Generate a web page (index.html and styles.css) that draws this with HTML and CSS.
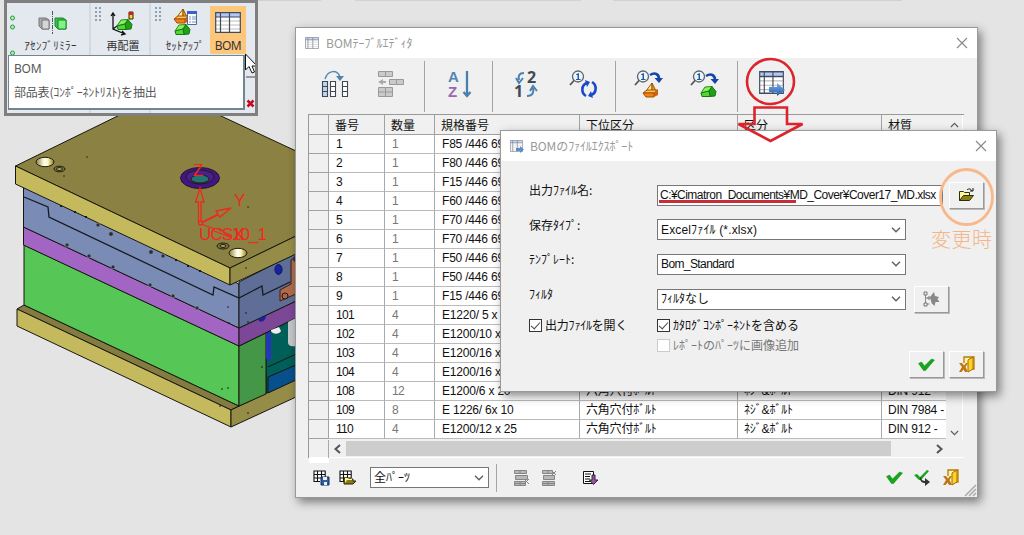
FILE: index.html
```html
<!DOCTYPE html>
<html lang="ja">
<head>
<meta charset="utf-8">
<title>BOM</title>
<link rel="stylesheet" href="styles.css">
</head>
<body>
<svg width="0" height="0" class="defs">
  <defs>
    <linearGradient id="hole"><stop offset="0" stop-color="#8b8030"/><stop offset=".45" stop-color="#fffef0"/><stop offset=".65" stop-color="#fff8c0"/><stop offset="1" stop-color="#857827"/></linearGradient>
    <linearGradient id="arrowBlue" x2="0" y2="1"><stop offset="0" stop-color="#7fb0e8"/><stop offset="1" stop-color="#2459a8"/></linearGradient>
    <symbol id="table" viewBox="0 0 26 21" preserveAspectRatio="none"><path d="M1 1h24v19H1z" fill="#fff"/><path d="M1 1h24v4H1z" fill="#b5c8f2"/><path d="M1 9h24M1 13h24M1 17h24" stroke="#bbb"/><path d="M.7.7h24.6v19.6H.7zM1 5h24M5.500 1v19M14.500 1v19" fill="none" stroke="#414b5e" stroke-width="1.200"/></symbol>
    <symbol id="check" viewBox="0 0 16 13"><path d="M0 5.500l3-1.500 3 4 7-7 3 1-9 10.500H5z" fill="#16a51b" stroke="#0d8b12" stroke-width=".5"/></symbol>
    <symbol id="exit" viewBox="0 0 17 17"><path d="M6 7V1h10v12h-4" fill="#fff3b2" stroke="#b67b00" stroke-width="1.300"/><path d="M10 4l5-3v12l-5 3z" fill="#ffd12b" stroke="#a86a00"/><path d="M1 7h3l2 2.500 2-2.500h2l-2.500 4L10 16H7l-1.500-2.500L3.500 16H1l3-5z" fill="#c07513"/></symbol>
    <symbol id="lens" viewBox="0 0 16 16"><path d="M5.500 10L1 15" stroke="#555" stroke-width="1.800"/><circle cx="9" cy="6.500" r="5.500" fill="#eef5fb" stroke="#5b6670" stroke-width="1.300"/><path d="M7 4.500l2-1.200h1V9h1.500v1H7V9h1.500V5H7z" fill="#2457a8"/></symbol>
    <symbol id="green" viewBox="0 0 17 11"><path d="M5 1l7-.5L9 5 1 7z" fill="#8bf25c" stroke="#258b18"/><path d="M12 .5l4 5-1 4.500-5 .5L9 5z" fill="#1fa018" stroke="#187713"/><path d="M1 7l8-2 1 5.500-8 0z" fill="#51d736" stroke="#187713"/></symbol>
    <symbol id="orange" viewBox="0 0 17 16"><path d="M10 1L4 9l6 1z" fill="#fff2a0" stroke="#975200"/><path d="M10 1l4 8-4 1z" fill="#e5a31c" stroke="#975200"/><path d="M1 11l4-3h11l-4 3z" fill="#ffc163" stroke="#a65000"/><path d="M1 11h11v4H4z" fill="#f28119" stroke="#a65000"/><path d="M12 11l4-3v5l-4 2z" fill="#c86407"/></symbol>
    <symbol id="jump" viewBox="0 0 14 12"><path d="M1 3c5-3 9-1 9 4" fill="none" stroke="#1645a9" stroke-width="2.600"/><path d="M5.500 6h8.500l-4 5z" fill="#1645a9"/></symbol>
    <symbol id="down" viewBox="0 0 10 6"><path d="M1 .8l4 4 4-4" fill="none" stroke="#606060" stroke-width="1.400"/></symbol>
    <symbol id="close" viewBox="0 0 12 12"><path d="M1 1l10 10M11 1L1 11" stroke="#888" stroke-width="1.100"/></symbol>
    <symbol id="minitable" viewBox="0 0 17 15"><path d="M1 1h11v11H1z" fill="#fff"/><path d="M.5 1h12M1 4.500h11M1 8h11M1 11.500h6M1 .5v11.500M4.500 1v11M8.500 1v10M12.200.5V8" stroke="#111" stroke-width="1.100" fill="none"/></symbol>
  </defs>
</svg>

<main class="desktop">
  <svg class="model" viewBox="0 110 296 325" width="296" height="325">
    <g stroke="#17170f" stroke-width="1" stroke-linejoin="round">
      <path d="M17 309l7-4 215 101-8 4z" fill="#847b40"/>
      <path d="M17 309l214 101v17L17 326z" fill="#c5b95e"/>
      <path d="M231 410l65-31v18l-65 30z" fill="#958c47"/>
      <path d="M266 333l30-15v61l-30 14z" fill="#005f58"/>
      <path d="M268 377l28-12v15l-28 13z" fill="#07508c"/>
      <path d="M268 367l28-13" fill="none"/>
      <path d="M24 245l215 101v60L24 305z" fill="#56c757"/>
      <path d="M239 346l27-13v61l-27 12z" fill="#449746"/>
      <path d="M23.500 227L239 328v18L23.500 245z" fill="#a365c4"/>
      <path d="M239 328l57-27v17l-57 28z" fill="#7c4796"/>
      <path d="M23.500 187L239 284v44L23.500 227z" fill="#7a8cb5"/>
      <path d="M239 282l57-29v48l-57 27z" fill="#5f6e96"/>
      <path d="M15.500 166L132 109h74l90 42v85l-66 32z" fill="#8a8142"/>
      <path d="M15.500 166L230 268v17L15.500 184z" fill="#c5b95e"/>
      <path d="M230 268l66-32v18l-66 31z" fill="#958c47"/>
    </g>
    <g fill="none" stroke="#151a20" stroke-width="1.300">
      <path d="M24 197l24 10 1 10 164 78 1-8 25 11 23-12 1 9 27-13"/>
      <path d="M60 206h3m11 6h3m8 5h3m87 43h3m9 6h3m9 5h3" stroke-dasharray="2 1" stroke-width="2"/>
    </g>
    <g fill="#26303d" stroke="#929b9b" stroke-width=".6"><circle cx="98" cy="225" r="2"/><circle cx="111" cy="234" r="2.300"/><circle cx="151" cy="252" r="2.300"/><circle cx="163" cy="256" r="2"/><circle cx="67" cy="245" r="2"/><circle cx="89" cy="256" r="2"/><circle cx="113" cy="267" r="2"/><circle cx="150" cy="285" r="2"/><circle cx="173" cy="296" r="2"/><circle cx="197" cy="308" r="2"/></g>
    <g fill="#111"><circle cx="87" cy="157" r=".7"/><circle cx="64" cy="176" r=".7"/><circle cx="248" cy="207" r=".7"/><circle cx="222" cy="389" r=".8"/><circle cx="228" cy="388" r=".8"/><circle cx="220" cy="406" r=".8"/><circle cx="248" cy="413" r=".8"/><circle cx="262" cy="367" r=".8"/><circle cx="228" cy="307" r=".8"/><circle cx="246" cy="313" r=".8"/><circle cx="229" cy="323" r=".8"/><circle cx="248" cy="322" r=".8"/><circle cx="246" cy="268" r=".7"/></g>
    <g stroke="#201e10"><ellipse cx="45" cy="162" rx="9" ry="4.700" fill="url(#hole)"/><ellipse cx="238" cy="253" rx="9" ry="4.700" fill="url(#hole)"/><ellipse cx="59.500" cy="169" rx="5.500" ry="2.800" fill="#7b7642"/><ellipse cx="59.500" cy="169" rx="3" ry="1.500" fill="#aaa65a"/><ellipse cx="223" cy="246" rx="6" ry="3" fill="#7b7642"/><ellipse cx="223" cy="246" rx="3" ry="1.500" fill="#aaa65a"/>
      <ellipse cx="200" cy="178" rx="19.500" ry="10.500" fill="#45148a"/><ellipse cx="200" cy="177" rx="14" ry="7" fill="#4a208f"/><ellipse cx="200" cy="179" rx="9" ry="4" fill="#247474"/></g>
    <ellipse cx="278.500" cy="269.500" rx="3.600" ry="5" fill="#16249b" stroke="#111a60"/><path d="M258 319c1 4 7 4 8-3z" fill="#19249c"/>
    <path d="M296 257l-5 3v24l-11 6v11l16-7z" fill="#af6b4c" stroke="#372018"/><circle cx="285" cy="296" r="3" fill="#ac6848" stroke="#28150e"/><circle cx="296" cy="259" r="3" fill="#334"/>
    <path d="M266 333h5v27l-3 1-2-3z" fill="#2536b8"/><path d="M271 330l8-3 2 4c-2 4-9 3-10 0z" fill="#eee"/><path d="M288 322l8-4v28c-6 1-8-1-8-4z" fill="#c3c7c7"/>
    <g fill="none" stroke="#ee291e" stroke-width="1.300">
      <path d="M198.500 221v-19h-3l4.500-14 4 14h-3v19M202 222l16-8-2-3 15-3-11 9-2-2-16 8M201 224l14 5m-1 2l16 6-11-9"/>
      <circle cx="200.500" cy="223" r="2"/>
    </g>
    <text class="ucs" x="193" y="176">Z</text><text class="ucs" x="234" y="206">Y</text>
    <text class="ucs" x="199" y="240" textLength="68">UCS10_1</text><text class="ucs" x="233" y="240">X</text>
  </svg>

  <section class="ribbon">
    <div class="group first">
      <svg width="12" height="48"><g fill="#b1efb0" stroke="#239c42"><circle cx="5.500" cy="11" r="2"/><circle cx="5.500" cy="20" r="2"/><circle cx="5.500" cy="46" r="2"/></g></svg>
      <div class="tool"><svg width="30" height="26"><path d="M1 8h7l3 2v9H4l-3-3z" fill="#aaa" stroke="#777"/><path d="M4 10h7v9H4z" fill="#d5d5d5" stroke="#777"/><path d="M14.500 1v23" stroke="#555" stroke-dasharray="4 1 1 1"/><path d="M17 8h8l3 2v9h-8l-3-3z" fill="#3cc04b" stroke="#188b28"/><path d="M20 10h8v9h-8z" fill="#83f184" stroke="#15852c"/></svg><span class="t-mirror">ｱｾﾝﾌﾞﾘﾐﾗｰ</span></div>
    </div>
    <div class="group second"><i class="dots"></i><div class="tool"><svg width="26" height="26"><path d="M3 2v16l12 5M3 18l11-8M1 5l2-3 2 3m7 15l3 3-4 1" fill="none" stroke="#111" stroke-width="1.300"/><use href="#green" x="6" y="8" width="17" height="11"/><path d="M19 1h4v7h-4z" fill="#ffd91f" stroke="#321"/><path d="M19 1h4v3h-4z" fill="#cd2020"/></svg><span>再配置</span></div></div>
    <div class="group third"><i class="dots"></i><div class="tool"><svg width="27" height="27"><use href="#orange" x="1" y="0" width="17" height="16"/><use href="#green" x="2" y="16" width="17" height="11"/><path d="M15.500 3.500h9v13h-9z" fill="#fff" stroke="#506a9f"/><path d="M15 3h10v3H15z" fill="#3761c8"/><path d="M17 9h2m1 0h4m-7 2h2m1 0h4m-7 3h2m1 0h4" stroke="#7890bd"/></svg><span>ｾｯﾄｱｯﾌﾟ</span></div><div class="tool active"><svg width="26" height="21"><use href="#table"/></svg><span>BOM</span></div></div>
    <div class="tip"><b>BOM</b><span>部品表(ｺﾝﾎﾟｰﾈﾝﾄﾘｽﾄ)を抽出</span></div>
    <svg class="cursor" width="13" height="64"><path d="M1 24h10" stroke="#999" stroke-width="2"/><path d="M.5 1v16l3.500-3.500 3 6.500 2.500-1-2.500-6h5z" fill="#fff" stroke="#111"/><path d="M2.500 47.500l6 6M8.500 47.500l-6 6" stroke="#c20a20" stroke-width="2.500"/></svg>
  </section>

  <section class="window editor">
    <header class="titlebar"><svg width="14" height="12"><use href="#table" width="14" height="12"/></svg><h1>BOMﾃｰﾌﾞﾙｴﾃﾞｨﾀ</h1><svg class="x" width="12" height="12"><use href="#close"/></svg></header>
    <div class="toolbar">
      <div class="tb a"><svg width="27" height="28"><path d="M4 9C7 0 16-1 19 7" fill="none" stroke="#5a8bb0" stroke-width="1.500"/><path d="M15 6l4 5 4-5z" fill="#4e83af"/><path d="M1.500 11.500h5v15h-5z" fill="#bcd6ef"/><path d="M9.500 11.500h5v15h-5zM21.500 11.500h5v15h-5z" fill="#fff"/><path d="M1.500 11.500h5v15h-5zm0 5h5m-5 5h5m3-10h5v15h-5zm0 5h5m-5 5h5m7-10h5v15h-5zm0 5h5m-5 5h5" fill="none" stroke="#3e4854" stroke-width="1.100"/></svg><svg width="28" height="28"><g fill="#cacaca" stroke="#999"><path d="M1.500 1.500h14v5h-14zM12.500 9.500h14v5h-14zM1.500 17.500h14v9h-14z"/><path d="M8.500 1v6M19.500 9v6M8.500 17v10M1 22h15"/></g><path d="M1 12l5-3v2h3v2H6v2z" fill="#aaa"/></svg></div>
      <div class="tb b"><svg width="25" height="28"><text x="0" y="12" class="ic blue">A</text><text x="0" y="27" class="ic purple">Z</text><path d="M19 1v24M15.500 22l3.500 4 3.500-4" fill="none" stroke="#4c7fac" stroke-width="2.300"/></svg></div>
      <div class="tb c"><svg width="25" height="28"><text x="13" y="13" class="num">2</text><text x="0" y="27" class="num">1</text><path d="M10 3C5 3 4 6 5 10M2 8l3 5 4-5M13 26c6 0 7-4 6-8m-3 3l3-5 4 5" fill="none" stroke="#4b82b0" stroke-width="2"/></svg><svg width="29" height="29"><use href="#lens" width="16" height="16"/><path d="M18 13c-6 2-6 10-1 13M22 25c6-2 6-10 1-13" fill="none" stroke="#1948cf" stroke-width="2.600"/><path d="M16 10l5 2-3 5zM24 28l-5-2 3-5z" fill="#1948cf"/></svg></div>
      <div class="tb d"><svg width="30" height="29"><use href="#lens" width="16" height="16"/><use href="#jump" x="15" y="2" width="14" height="12"/><use href="#orange" x="8" y="12" width="17" height="16"/></svg><svg width="30" height="29"><use href="#lens" width="16" height="16"/><use href="#jump" x="15" y="3" width="14" height="12"/><use href="#green" x="10" y="16" width="17" height="11"/></svg></div>
      <div class="tb e"><svg width="26" height="28"><use href="#table" y="1" width="25" height="23"/><path d="M10 17h8v-4l8 7-8 6v-4h-8z" fill="url(#arrowBlue)"/></svg></div>
    </div>
    <div class="sheet">
      <div class="tablewrap">
      <table>
        <colgroup><col class="c0"><col class="c1"><col class="c2"><col class="c3"><col class="c4"><col class="c5"><col class="c6"></colgroup>
        <thead><tr><th></th><th>番号</th><th>数量</th><th>規格番号</th><th>下位区分</th><th>区分</th><th>材質</th></tr></thead>
        <tbody>
          <tr><th></th><td>1</td><td>1</td><td>F85 /446 69</td><td></td><td></td><td></td></tr>
          <tr><th></th><td>2</td><td>1</td><td>F80 /446 69</td><td></td><td></td><td></td></tr>
          <tr><th></th><td>3</td><td>1</td><td>F15 /446 69</td><td></td><td></td><td></td></tr>
          <tr><th></th><td>4</td><td>1</td><td>F60 /446 69</td><td></td><td></td><td></td></tr>
          <tr><th></th><td>5</td><td>1</td><td>F70 /446 69</td><td></td><td></td><td></td></tr>
          <tr><th></th><td>6</td><td>1</td><td>F70 /446 69</td><td></td><td></td><td></td></tr>
          <tr><th></th><td>7</td><td>1</td><td>F50 /446 69</td><td></td><td></td><td></td></tr>
          <tr><th></th><td>8</td><td>1</td><td>F50 /446 69</td><td></td><td></td><td></td></tr>
          <tr><th></th><td>9</td><td>1</td><td>F15 /446 69</td><td></td><td></td><td></td></tr>
          <tr><th></th><td>101</td><td>4</td><td>E1220/ 5 x</td><td></td><td></td><td></td></tr>
          <tr><th></th><td>102</td><td>4</td><td>E1200/10 x</td><td></td><td></td><td></td></tr>
          <tr><th></th><td>103</td><td>4</td><td>E1200/16 x</td><td></td><td></td><td></td></tr>
          <tr><th></th><td>104</td><td>4</td><td>E1200/16 x</td><td></td><td></td><td></td></tr>
          <tr><th></th><td>108</td><td>12</td><td>E1200/6 x 20</td><td>六角穴付ﾎﾞﾙﾄ</td><td>ﾈｼﾞ&amp;ﾎﾞﾙﾄ</td><td>DIN 912 -</td></tr>
          <tr><th></th><td>109</td><td>8</td><td>E 1226/ 6x 10</td><td>六角穴付ﾎﾞﾙﾄ</td><td>ﾈｼﾞ&amp;ﾎﾞﾙﾄ</td><td>DIN 7984 -</td></tr>
          <tr><th></th><td>110</td><td>4</td><td>E1200/12 x 25</td><td>六角穴付ﾎﾞﾙﾄ</td><td>ﾈｼﾞ&amp;ﾎﾞﾙﾄ</td><td>DIN 912 -</td></tr>
        </tbody>
      </table>
      <div class="vscroll"><svg class="flip" width="9" height="6"><use href="#down"/></svg><svg width="9" height="6"><use href="#down"/></svg></div>
      </div>
      <div class="hscroll"><i></i><svg width="17" height="10"><path d="M11 1L6.500 5 11 9" fill="none" stroke="#555" stroke-width="2"/></svg><b></b><svg width="97" height="10"><path d="M46 1l4.500 4L46 9" fill="none" stroke="#555" stroke-width="2"/></svg></div>
    </div>
    <footer class="status">
      <svg width="17" height="15"><use href="#minitable"/><path d="M8 7h8v8H8z" fill="#315da5" stroke="#102c5e"/><path d="M10 7h4v3h-4zm1 5h3v3h-3z" fill="#eee"/></svg>
      <svg width="17" height="15"><use href="#minitable"/><path d="M5 14V8h4l1 1h4v2h3l-3 3z" fill="#887b17" stroke="#282400"/><path d="M6 11V8h3l1 1h3v1H8l-2 3z" fill="#fff69a"/></svg>
      <div class="combo parts"><span>全ﾊﾟｰﾂ</span><svg width="10" height="6"><use href="#down"/></svg></div>
      <i class="bar"></i>
      <svg width="17" height="18"><g fill="#b8b8b8" stroke="#858585"><path d="M1.500 1.500h12v3h-12zM2.500 6.500h12v4h-12zM1.500 12.500h11v4h-11z"/><path d="M7 1v4M7 12v5M1 14.500h12M11 10l5 5m0-5l-5 5"/></g></svg>
      <svg width="17" height="18"><g fill="#b8b8b8" stroke="#858585"><path d="M1.500 1.500h10v3h-10zM2.500 6.500h11v4h-11zM1.500 12.500h12v4h-12z"/><path d="M7 1v4M7 12v5M1 14.500h12M11 2l4 4m0-4l-4 4"/></g></svg>
      <svg width="17" height="15"><path d="M1.500 1.500h10v12h-10z" fill="#fff" stroke="#111"/><path d="M3 4h6M3 6.500h5M3 9h5M3 11.500h6" stroke="#111"/><path d="M10 5h3v5h3l-4.500 4.500L7.500 10H10z" fill="#9455a1" stroke="#342239"/></svg>
      <div class="actions"><svg width="17" height="13"><use href="#check"/></svg><svg width="17" height="17"><path d="M0 6l3-1 3 3 7-7 2 1-8 9H5z" fill="#16a51b"/><path d="M7 8c0 3 2 4 4 4V9l5 4-5 4v-3c-3 0-5-2-5-5z" fill="#333"/></svg><svg width="17" height="17"><use href="#exit"/></svg></div>
    </footer>
    <svg class="grip" width="13" height="13"><path d="M1 12L12 1M5 12l7-7M9 12l3-3" stroke="#aaa" stroke-width="1.500"/></svg>
  </section>

  <section class="window export">
    <header class="titlebar"><svg width="15" height="13"><use href="#table" width="13" height="12"/><path d="M6 8h4V6l4 3.500-4 3.500v-2H6z" fill="#2868b3"/></svg><h1>BOMのﾌｧｲﾙｴｸｽﾎﾟｰﾄ</h1><svg class="x" width="12" height="12"><use href="#close"/></svg></header>
    <form>
      <label>出力ﾌｧｲﾙ名:</label><div class="line"><div class="combo path"><span>C:¥Cimatron_Documents¥MD_Cover¥Cover17_MD.xlsx</span></div><button type="button" aria-label="参照"><svg width="17" height="15"><path d="M1.500 12.500v-9h4l1 1h5v3" fill="#fff69f" stroke="#332e00"/><path d="M1.500 12.500l4-5h10l-4 5z" fill="#89811d" stroke="#332e00"/><path d="M9 2c2-2 4-1 5 1m-2 0h3V0" fill="none" stroke="#111"/></svg></button></div>
      <label>保存ﾀｲﾌﾟ:</label><div class="line"><div class="combo"><span class="wide">Excelﾌｧｲﾙ (*.xlsx)</span><svg width="10" height="6"><use href="#down"/></svg></div></div>
      <label>ﾃﾝﾌﾟﾚｰﾄ:</label><div class="line"><div class="combo"><span class="narrow">Bom_Standard</span><svg width="10" height="6"><use href="#down"/></svg></div></div>
      <label>ﾌｨﾙﾀ</label><div class="line"><div class="combo"><span>ﾌｨﾙﾀなし</span><svg width="10" height="6"><use href="#down"/></svg></div><button type="button" aria-label="選択"><svg width="17" height="16"><path d="M2.500 2v12M2.500 7h4M2.500 13h4" stroke="#888"/><path d="M1 1h3v3H1zm4 5h2v2H5zM1 12h3v3H1z" fill="#eee" stroke="#777"/><path d="M7 6l4-5 1 4 4 1-1.500 2 2 3h-4l-1 4-3-3z" fill="#888"/></svg></button></div>
    </form>
    <div class="checks"><span class="ck on open"><i></i>出力ﾌｧｲﾙを開く</span><div><span class="ck on"><i></i>ｶﾀﾛｸﾞｺﾝﾎﾟｰﾈﾝﾄを含める</span><span class="ck off"><i></i>ﾚﾎﾟｰﾄのﾊﾟｰﾂに画像追加</span></div></div>
    <div class="buttons"><button type="button" aria-label="OK"><svg width="17" height="13"><use href="#check"/></svg></button><button type="button" aria-label="キャンセル"><svg width="17" height="17"><use href="#exit"/></svg></button></div>
  </section>

  <svg class="marks" width="1024" height="535"><path d="M258 .5h63M355 .5h226M613 .5h289" stroke="#d2d2d2"/><g fill="none" stroke="#dc242c" stroke-width="2.600"><ellipse cx="770.500" cy="81.500" rx="23.500" ry="22.500"/><path d="M754.500 107.500H787V124h15.500L770.500 141 738.500 124h16z"/></g><path d="M659 201.500h137" stroke="#c62d37" stroke-width="3"/><ellipse cx="966.500" cy="197" rx="26" ry="27.500" fill="none" stroke="#f8b88c" stroke-width="2.800"/><text class="note" x="931" y="247" textLength="61">変更時</text></svg>
</main>
</body>
</html>
```
FILE: styles.css
```css
* { box-sizing: border-box; }
body { margin: 0; font: 12px/16px "Noto Sans CJK JP", sans-serif; color: #111; }
.defs { position: absolute; }
svg { display: block; flex: none; overflow: visible; }
.desktop { position: relative; width: 1024px; height: 535px; overflow: hidden; background: #e4e4e4; }
.model { position: absolute; left: 0; top: 110px; overflow: hidden; }
.ucs { font: 17px "Liberation Sans", sans-serif; fill: #ee291e; }

.ribbon { position: absolute; left: 4px; top: 0; width: 254px; height: 116px; border: 3px solid #7f7f7f; background: #e3e9ee; display: flex; overflow: hidden; color: #333; }
.group { display: flex; flex: none; height: 111px; border-right: 2px solid #d3dadf; padding-top: 4px; }
.first { width: 84px; }
.second { width: 60px; }
.third { width: 104px; border: 0; }
.tool { display: flex; flex: none; flex-direction: column; align-items: center; white-space: nowrap; height: 47px; justify-content: space-between; padding-top: 3px; }
.tool span { font-size: 11px; line-height: 17px; }
.first .tool { width: 70px; padding-right: 7px; }
.first .tool svg { margin-left: 4px; }
.t-mirror { letter-spacing: .4px; }
.second .tool { width: 42px; padding-top: 4px; }
.third .tool { width: 46px; padding-top: 1px; }
.third .tool.active { width: 36px; background: #fdc77b; margin: -1px 0 0 2px; padding-top: 6px; height: 48px; }
.tool.active span { font-family: "Noto Sans"; font-size: 12px; letter-spacing: -.6px; }
.dots { flex: none; width: 8px; height: 15px; margin: -1px 0 0 3px; background: radial-gradient(circle, #8aa0b6 1px, transparent 1.400px) 0 0 / 4px 4px; }
.tip { position: absolute; left: 1px; top: 52px; width: 237px; height: 55px; background: #fff; border: 1px solid #738690; border-right-width: 2px; border-bottom-width: 2px; padding: 5px 6px 5px 5px; display: flex; flex-direction: column; gap: 7px; color: #575757; white-space: nowrap; letter-spacing: -.2px; }
.tip b { font: 12px/16px "Noto Sans", sans-serif; }
.cursor { position: absolute; left: 238px; top: 50px; }

.window { position: absolute; background: #f0f0f0; border: 1px solid #999; box-shadow: 3px 4px 9px #0007; display: flex; flex-direction: column; }
.titlebar { display: flex; align-items: center; background: #fff; padding: 0 9px; flex: none; }
.titlebar h1 { font-weight: 400; font-size: 12px; line-height: 16px; margin: 0 0 0 7px; color: #999; }
.titlebar svg:first-child { opacity: .75; }
.titlebar .x { margin-left: auto; }
.editor { left: 295px; top: 27px; width: 683px; height: 471px; }
.editor .titlebar { height: 30px; }
.toolbar { height: 57px; display: flex; padding-top: 3px; }
.tb { height: 51px; border-right: 1px solid #a3a3a3; padding-top: 9px; display: flex; }
.a { width: 129px; padding-left: 25px; gap: 29px; }
.b { width: 68px; padding-left: 23px; }
.c { width: 123px; padding-left: 21px; gap: 30px; }
.d { width: 122px; padding-left: 18px; gap: 26px; }
.e { border: 0; padding-left: 21px; }
.ic { font: bold 15px/1 "Liberation Sans", sans-serif; }
.blue { fill: #5585b2; }
.purple { fill: #9768ae; }
.num { font: bold 16px "Noto Sans", sans-serif; fill: #3f4b57; }

.sheet { margin: 0 13px 0 12px; border-top: 1px solid #999; border-left: 1px solid #999; }
.tablewrap { display: flex; height: 325px; }
table { width: 637px; table-layout: fixed; border-collapse: separate; border-spacing: 0; height: 324px; }
.c0 { width: 20px; } .c1 { width: 56px; } .c2 { width: 50px; } .c3 { width: 145px; } .c4 { width: 158px; } .c5 { width: 144px; } .c6 { width: 64px; }
th, td { height: 19px; padding: 0 0 0 6px; border-right: 1px solid #aaa; border-bottom: 1px solid #bbb; overflow: hidden; white-space: nowrap; text-align: left; font-weight: 400; line-height: 17px; }
td { background: #fff; font-family: "Liberation Sans", "Noto Sans CJK JP", sans-serif; letter-spacing: -.2px; }
th { background: #f0f0f0; border-color: #a2a2a2; }
thead th { height: 20px; }
td:nth-child(2) { padding-left: 7px; letter-spacing: -.7px; }
td:nth-child(3) { padding-left: 7px; letter-spacing: -.7px; color: #777; }
td:nth-child(4) { padding-left: 7px; }
th:last-child, td:last-child { border-right: 0; }
tbody tr > th { border-right: 1px solid #a2a2a2; }
.vscroll { width: 17px; display: flex; flex-direction: column; justify-content: space-between; align-items: center; padding: 7px 0 4px; border-right: 1px solid #fff; }
.flip { transform: scaleY(-1); }
.hscroll { height: 18px; display: flex; align-items: center; border-bottom: 1px solid #fff; }
.hscroll i { width: 20px; height: 18px; border-right: 1px solid #aaa; box-shadow: 0 5px 0 #fff; }
.hscroll b { width: 545px; height: 15px; background: #cdcdcd; }
.hscroll svg:last-child { width: 73px; }
.status { display: flex; align-items: center; padding: 0 18px 0 17px; height: 39px; }
.status > svg + svg { margin-left: 9px; }
.combo { border: 1px solid #777; background: #fff; height: 21px; width: 249px; padding: 0 4px 0 3px; display: flex; justify-content: space-between; align-items: center; white-space: nowrap; font-family: "Liberation Sans", "Noto Sans CJK JP", sans-serif; }
.parts { width: 119px; margin-left: 14px; }
.bar { width: 1px; height: 28px; background: #a5a5a5; margin: 0 16px 0 7px; }
.status .bar + svg + svg { margin-left: 11px; }
.status .bar + svg + svg + svg { margin-left: 24px; }
.actions { display: flex; gap: 11px; align-items: center; margin-left: auto; }
.grip { position: absolute; right: 0; bottom: 0; }

.export { left: 500px; top: 130px; width: 497px; height: 262px; }
.export .titlebar { height: 30px; }
.export .titlebar h1 { margin-left: 5px; letter-spacing: -.1px; }
.export form { display: grid; grid-template-columns: 128px 1fr; grid-template-rows: 35px 34px 35px 35px; margin: 12px 0 0 28px; align-items: center; }
.export label { padding-bottom: 1px; }
.line { display: flex; align-items: center; height: 28px; margin-top: 9px; gap: 8px; }
.line .path { width: 286px; padding: 0 0 0 2px; letter-spacing: -.53px; }
.line:has(.path) { gap: 6px; }
.wide { letter-spacing: .15px; }
.narrow { letter-spacing: -.6px; }
button { width: 35px; height: 27px; flex: none; padding: 0; display: flex; align-items: center; justify-content: center; background: #f0f0f0; border: 1px solid; border-color: #fff #999 #999 #fff; box-shadow: 1px 1px 0 #bbb; }
.checks { display: flex; margin: 3px 0 0 28px; }
.ck { display: flex; align-items: center; height: 20px; gap: 3px; white-space: nowrap; }
.open { width: 128px; letter-spacing: -.2px; }
.ck i { width: 13px; height: 13px; border: 1px solid #333; background: #fff; display: flex; }
.ck.on i::after { content: ""; width: 8px; height: 4px; margin: 2px 0 0 1px; border: solid #444; border-width: 0 0 1.500px 1.500px; transform: rotate(-48deg); }
.off { color: #777; }
.off i { border-color: #ccc; }
.buttons { display: flex; gap: 5px; justify-content: flex-end; padding: 0 12px; margin-top: -4px; }
.marks { position: absolute; left: 0; top: 0; pointer-events: none; }
.note { font: 300 20px "Noto Sans CJK JP", sans-serif; fill: #f5b587; }
```
